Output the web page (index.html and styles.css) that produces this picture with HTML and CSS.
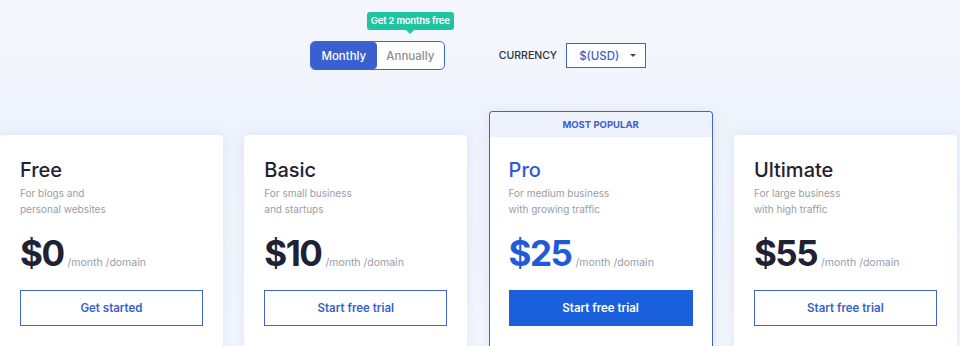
FILE: index.html
```html
<!DOCTYPE html>
<html lang="en">

<head>
  <meta charset="UTF-8">
  <meta name="viewport" content="width=device-width,initial-scale=1.0">
  <title>Pricing</title>
  <link rel="stylesheet" href="styles.css">
</head>

<body>
  <div class="controls">
    <div class="toggle">
      <span class="tip">Get 2 months free</span>
      <button class="toggle-btn active">Monthly</button>
      <button class="toggle-btn">Annually</button>
    </div>
    <div class="currency">
      <span class="currency-label">CURRENCY</span>
      <div class="select">
        <span>$(USD)</span>
        <span class="caret"></span>
      </div>
    </div>
  </div>

  <div class="plans">
    <div class="plan">
      <div class="plan-body">
        <h2>Free</h2>
        <p class="desc">For blogs and<br>personal websites</p>
        <div class="price"><strong>$0</strong><span>/month /domain</span></div>
        <button class="cta">Get started</button>
      </div>
    </div>
    <div class="plan">
      <div class="plan-body">
        <h2>Basic</h2>
        <p class="desc">For small business<br>and startups</p>
        <div class="price"><strong>$10</strong><span>/month /domain</span></div>
        <button class="cta">Start free trial</button>
      </div>
    </div>
    <div class="plan popular">
      <div class="badge">MOST POPULAR</div>
      <div class="plan-body">
        <h2>Pro</h2>
        <p class="desc">For medium business<br>with growing traffic</p>
        <div class="price"><strong>$25</strong><span>/month /domain</span></div>
        <button class="cta">Start free trial</button>
      </div>
    </div>
    <div class="plan">
      <div class="plan-body">
        <h2>Ultimate</h2>
        <p class="desc">For large business<br>with high traffic</p>
        <div class="price"><strong>$55</strong><span>/month /domain</span></div>
        <button class="cta">Start free trial</button>
      </div>
    </div>
  </div>
</body>

</html>
```

FILE: styles.css
```css
body{
  margin: 0;
  height: 346px;
  overflow: hidden;
  font-family: "Inter", "Noto Sans", sans-serif;
  background: linear-gradient(180deg, #f5f7fd 0%, #eff3fc 40%, #f3f6fd 100%);
  color: #1f2234;
}
button{
  font-family: inherit;
  cursor: pointer;
}

/* top controls */
.controls{
  display: flex;
  justify-content: center;
  align-items: center;
  gap: 54px;
  padding-top: 41px;
  padding-right: 4px;
}
.toggle{
  position: relative;
  display: flex;
  border: 1px solid #3f63d3;
  border-radius: 5px;
  background: white;
  height: 27px;
}
.toggle-btn{
  border: 0;
  background: none;
  font-size: 11.5px;
  font-weight: 500;
  color: #8a8c96;
  width: 67px;
  padding: 0;
}
.toggle-btn.active{
  background: #3a5fcf;
  color: white;
  border-radius: 4px;
  width: 66px;
}
.tip{
  position: absolute; /* sits above the toggle */
  left: 56px;
  top: -30px;
  background: #1fc4a3;
  color: white;
  font-size: 9.5px;
  font-weight: 600;
  letter-spacing: -0.2px;
  padding: 3px 4px;
  border-radius: 3px;
  white-space: nowrap;
  line-height: 12px;
}
.tip::after{
  content: "";
  position: absolute;
  left: 39px;
  bottom: -4px;
  border: 4px solid transparent;
  border-top-color: #1fc4a3;
  border-bottom: 0;
}
.currency{
  display: flex;
  align-items: center;
  gap: 9px;
}
.currency-label{
  font-size: 10.5px;
  font-weight: 500;
  color: #2c2f3a;
}
.select{
  display: flex;
  align-items: center;
  justify-content: space-between;
  width: 80px;
  height: 25px;
  box-sizing: border-box;
  border: 1px solid #3f63d3;
  background: white;
  padding: 0 9px 0 12px;
  font-size: 11.5px;
  font-weight: 500;
  color: #3a5fcf;
}
.caret{
  border: 3px solid transparent;
  border-top: 3px solid #444;
  border-bottom: 0;
}

/* plan cards */
.plans{
  display: grid;
  grid-template-columns: 223px 223px 224px 223px;
  gap: 21.3px;
  margin-top: 41px;
  align-items: start;
}
.plan{
  background: white;
  border-radius: 4px;
  margin-top: 24px;
  height: 260px;
  box-shadow: 0 0 12px rgba(180, 198, 240, 0.35);
}
.plan-body{
  padding: 23px 20px;
}
.plan h2{
  margin: 0;
  font-size: 20px;
  line-height: 24px;
  font-weight: 500;
  color: #1f2234;
}
.desc{
  margin: 3px 0 0;
  font-size: 10px;
  line-height: 16px;
  color: #9a9ca6;
}
.price{
  display: flex;
  align-items: baseline;
  margin-top: 16px;
}
.price strong{
  font-size: 35px;
  line-height: 40px;
  font-weight: 700;
  letter-spacing: -1.5px;
  color: #1f2234;
}
.price span{
  margin-left: 4px;
  font-size: 10.5px;
  color: #9a9ca6;
}
.cta{
  display: block;
  width: 100%;
  height: 36px;
  margin-top: 17px;
  border: 1px solid #3f63d3;
  background: white;
  color: #3a5fcf;
  font-size: 11.5px;
  font-weight: 600;
}

/* most popular */
.plan.popular{
  margin-top: 0;
  height: 284px;
  border: 1px solid #3f63d3;
  border-bottom: 0;
}
.badge{
  height: 25px;
  line-height: 25px;
  background: #eef2fd;
  border-radius: 4px 4px 0 0;
  text-align: center;
  font-size: 9.5px;
  font-weight: 700;
  color: #3a5fcf;
}
.popular .plan-body{
  padding: 21px 19px;
}
.popular h2{
  color: #2b5bd7;
}
.popular .price strong{
  color: #1f5bd8;
}
.popular .cta{
  background: #1a5fdb;
  border-color: #1a5fdb;
  color: white;
}
```
